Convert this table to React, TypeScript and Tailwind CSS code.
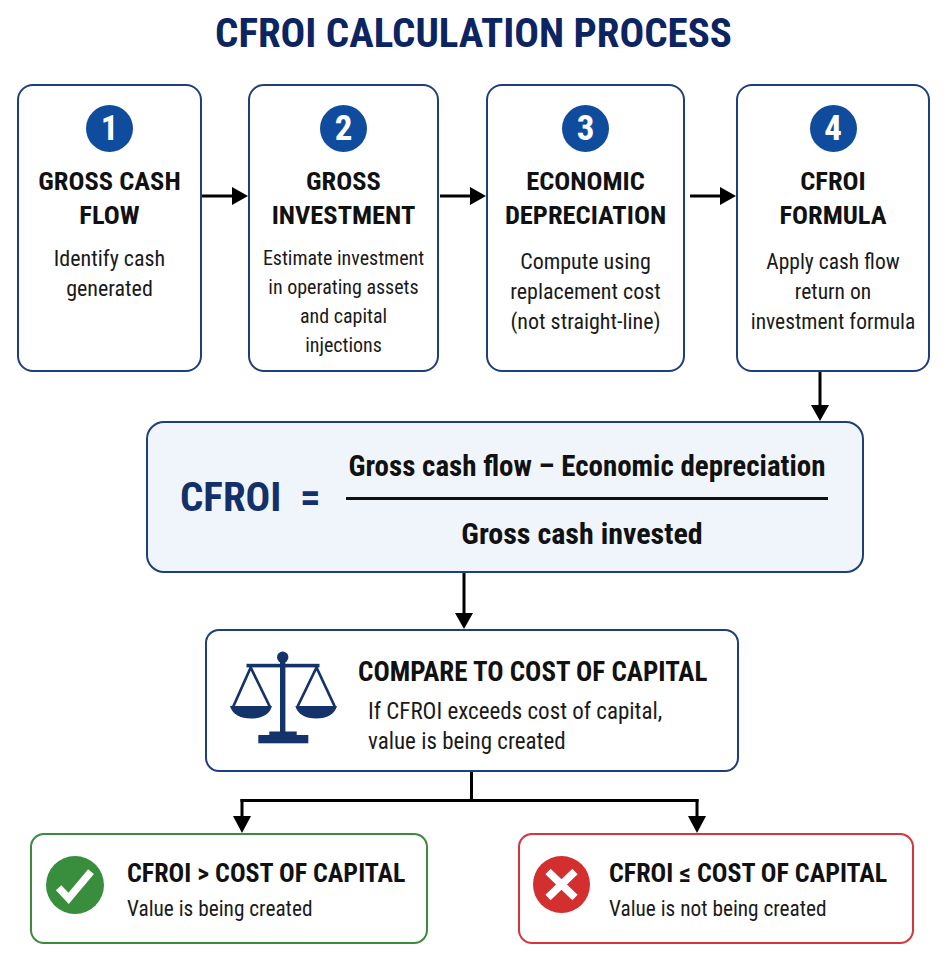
import React from "react";

type Step = {
  num: string;
  title: string[];
  lines: string[];
  width: string;
  textSize: string;
};

const steps: Step[] = [
  {
    num: "1",
    title: ["GROSS CASH", "FLOW"],
    lines: ["Identify cash", "generated"],
    width: "w-[185px]",
    textSize: "text-[22px] leading-[30px]",
  },
  {
    num: "2",
    title: ["GROSS", "INVESTMENT"],
    lines: ["Estimate investment", "in operating assets", "and capital", "injections"],
    width: "w-[191px]",
    textSize: "text-[20px] leading-[29px]",
  },
  {
    num: "3",
    title: ["ECONOMIC", "DEPRECIATION"],
    lines: ["Compute using", "replacement cost", "(not straight-line)"],
    width: "w-[199px]",
    textSize: "text-[22px] leading-[30px] pt-[3px]",
  },
  {
    num: "4",
    title: ["CFROI", "FORMULA"],
    lines: ["Apply cash flow", "return on", "investment formula"],
    width: "w-[194px]",
    textSize: "text-[21.5px] leading-[30px] pt-[3px]",
  },
];

const gaps = ["w-[46px]", "w-[47px]", "w-[51px]"];

function RightArrow() {
  return (
    <svg width="100%" height="20" viewBox="0 0 46 20" preserveAspectRatio="xMaxYMid meet">
      <rect x="0" y="8.5" width="32" height="3" fill="#000" />
      <polygon points="30,1 46,10 30,19" fill="#000" />
    </svg>
  );
}

function DownArrow({ height }: { height: number }) {
  return (
    <svg width="18" height={height} viewBox={`0 0 18 ${height}`}>
      <rect x="7.5" y="0" width="3" height={height - 14} fill="#000" />
      <polygon points={`0,${height - 16} 18,${height - 16} 9,${height}`} fill="#000" />
    </svg>
  );
}

function StepCard({ step }: { step: Step }) {
  return (
    <div
      className={`${step.width} flex-none h-full border-2 border-[#1f3f7c] rounded-[16px] bg-white flex flex-col items-center pt-[19px] text-center`}
    >
      <div className="w-[47px] h-[47px] rounded-full bg-[#0f4c9e] flex items-center justify-center text-white font-bold text-[35px] leading-none">
        {step.num}
      </div>
      <div className="mt-[12px] text-[26.5px] leading-[34px] font-bold text-[#111]">
        {step.title.map((t) => (
          <div key={t}>{t}</div>
        ))}
      </div>
      <div className={`mt-[12px] text-[#1a1a1a] ${step.textSize}`}>
        {step.lines.map((l) => (
          <div key={l}>{l}</div>
        ))}
      </div>
    </div>
  );
}

function ScaleIcon() {
  return (
    <svg width="130" height="110" viewBox="0 0 130 110" className="flex-none">
      <g fill="#15336b" stroke="none">
        <circle cx="62.7" cy="17.3" r="5.7" />
        <rect x="26.5" y="23.8" width="73" height="3.6" />
        <rect x="60" y="17" width="5.4" height="76" />
        <rect x="49.3" y="91.5" width="27.4" height="4" />
        <rect x="38.3" y="95" width="50" height="8.3" />
        <path d="M10 66 L52 66 C50 74 42 78.5 31 78.5 C20 78.5 12 74 10 66 Z" />
        <path d="M75.3 66 L117 66 C115 74 107 78.5 96.2 78.5 C85.3 78.5 77.3 74 75.3 66 Z" />
      </g>
      <g stroke="#15336b" strokeWidth="2.7" fill="none" strokeLinecap="round">
        <path d="M30.7 27.5 L13.5 66 M30.7 27.5 L49.5 66" />
        <path d="M96.5 27.5 L77.8 66 M96.5 27.5 L114.5 66" />
      </g>
    </svg>
  );
}

function CheckIcon() {
  return (
    <svg width="58" height="58" viewBox="0 0 58 58" className="flex-none">
      <circle cx="29" cy="29" r="29" fill="#388e3c" />
      <polyline
        points="12.6,31.7 22.6,42.3 45,15.7"
        fill="none"
        stroke="#fff"
        strokeWidth="7.5"
        strokeLinejoin="miter"
      />
    </svg>
  );
}

function CrossIcon() {
  return (
    <svg width="57" height="57" viewBox="0 0 57 57" className="flex-none">
      <circle cx="28.5" cy="28.5" r="28.5" fill="#d32f2f" />
      <path d="M15 15.5 L42 41.5 M42 15.5 L15 41.5" stroke="#fff" strokeWidth="7.5" />
    </svg>
  );
}

export default function App() {
  return (
    <div className="w-[947px] h-[963px] bg-white overflow-hidden font-['Roboto',sans-serif] font-stretch-condensed">
      {/* Title */}
      <div className="h-[84px] flex justify-center pt-[9px]">
        <h1 className="text-[41px] leading-[48px] font-bold text-[#0c2461]">
          CFROI CALCULATION PROCESS
        </h1>
      </div>

      {/* Steps row */}
      <div className="h-[288px] flex px-[17px]">
        {steps.map((s, i) => (
          <React.Fragment key={s.num}>
            <StepCard step={s} />
            {i < gaps.length && (
              <div className={`${gaps[i]} flex-none pt-[102px]`}>
                <RightArrow />
              </div>
            )}
          </React.Fragment>
        ))}
      </div>

      {/* Arrow to formula */}
      <div className="h-[49px] pl-[811px]">
        <DownArrow height={49} />
      </div>

      {/* Formula */}
      <div className="ml-[146px] w-[718px] h-[152px] rounded-[18px] border-2 border-[#1f3f7c] bg-[#f0f5fb] flex items-center pl-[32px]">
        <div className="w-[120px] flex-none text-[41px] font-bold text-[#13306b] leading-none">
          CFROI
        </div>
        <div className="w-[46px] flex-none text-[41px] font-bold text-[#13306b] leading-none">
          =
        </div>
        <div className="w-[482px] flex-none flex flex-col items-center mt-[6px]">
          <div className="text-[29px] leading-[36px] font-bold text-[#111] whitespace-nowrap">
            Gross cash flow – Economic depreciation
          </div>
          <div className="w-full h-[3px] bg-[#111] mt-[13px]" />
          <div className="text-[30px] leading-[36px] font-bold text-[#111] mt-[16px] pr-[10px] whitespace-nowrap">
            Gross cash invested
          </div>
        </div>
      </div>

      {/* Arrow to compare */}
      <div className="h-[56px] pl-[455px]">
        <DownArrow height={56} />
      </div>

      {/* Compare */}
      <div className="ml-[205px] w-[534px] h-[143px] rounded-[14px] border-2 border-[#1f3f7c] bg-white flex items-start">
        <div className="ml-[13px] mt-[9px]">
          <ScaleIcon />
        </div>
        <div className="ml-[8px] mt-[24px]">
          <div className="text-[27px] leading-[34px] font-bold text-[#111]">
            COMPARE TO COST OF CAPITAL
          </div>
          <div className="mt-[8px] pl-[10px] text-[23px] leading-[30px] text-[#1a1a1a]">
            <div>If CFROI exceeds cost of capital,</div>
            <div>value is being created</div>
          </div>
        </div>
      </div>

      {/* Branch connector */}
      <svg width="947" height="61" viewBox="0 0 947 61" className="block">
        <g fill="#000">
          <rect x="470" y="0" width="3" height="30" />
          <rect x="240.5" y="27" width="458" height="3" />
          <rect x="240.5" y="27" width="3" height="20" />
          <rect x="695.5" y="27" width="3" height="20" />
          <polygon points="233,44 251,44 242,61" />
          <polygon points="688,44 706,44 697,61" />
        </g>
      </svg>

      {/* Outcomes */}
      <div className="flex pl-[30px] gap-[90px]">
        <div className="w-[398px] h-[111px] flex-none rounded-[14px] border-2 border-[#3b8a3e] bg-white flex items-start">
          <div className="ml-[14px] mt-[21px]">
            <CheckIcon />
          </div>
          <div className="ml-[23px] mt-[22px]">
            <div className="text-[26px] leading-[32px] font-bold text-[#111]">
              CFROI &gt; COST OF CAPITAL
            </div>
            <div className="mt-[5px] text-[21.3px] leading-[30px] text-[#1a1a1a]">
              Value is being created
            </div>
          </div>
        </div>
        <div className="w-[396px] h-[111px] flex-none rounded-[14px] border-2 border-[#d8343c] bg-white flex items-start">
          <div className="ml-[13px] mt-[21px]">
            <CrossIcon />
          </div>
          <div className="ml-[19px] mt-[22px]">
            <div className="text-[26px] leading-[32px] font-bold text-[#111]">
              CFROI ≤ COST OF CAPITAL
            </div>
            <div className="mt-[5px] text-[21.3px] leading-[30px] text-[#1a1a1a]">
              Value is not being created
            </div>
          </div>
        </div>
      </div>
    </div>
  );
}
